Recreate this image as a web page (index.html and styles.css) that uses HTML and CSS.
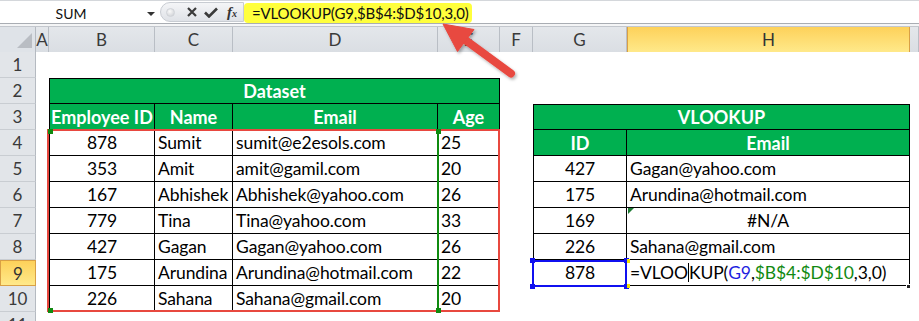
FILE: index.html
```html
<!DOCTYPE html>
<html>
<head>
<meta charset="utf-8">
<link rel="stylesheet" href="styles.css">
</head>
<body>
<div class="app">
  <div class="fbar">
    <div class="namebox"><span class="nb-text">SUM</span><span class="nb-arrow"></span></div>
    <div class="fbtns">
      <span class="dot"></span>
      <svg class="ic-x" width="10" height="10" viewBox="0 0 10 10"><path d="M1 1L9 9M9 1L1 9" stroke="#3a3a3a" stroke-width="2.2"/></svg>
      <svg class="ic-ok" width="14" height="11" viewBox="0 0 14 11"><path d="M1 5.5L5 9.5L13 1.5" stroke="#3a3a3a" stroke-width="2.6" fill="none"/></svg>
      <span class="fx">f<sub>x</sub></span>
    </div>
    <div class="finput"><span class="fhl">=VLOOKUP(G9,$B$4:$D$10,3,0)</span></div>
  </div>
  <div class="fgap"></div>
  <div class="sheet">
    <div class="row hrow">
      <div class="corner"><svg width="36" height="25" viewBox="0 0 36 25"><path d="M17 21L32 21L32 6Z" fill="#b9bdc3"/></svg></div>
      <div class="ch">A</div><div class="ch">B</div><div class="ch">C</div><div class="ch">D</div><div class="ch">E</div><div class="ch">F</div><div class="ch">G</div><div class="ch active">H</div><div class="ch"></div>
    </div>
    <div class="row"><div class="rh">1</div><div class="c"></div><div class="c"></div><div class="c"></div><div class="c"></div><div class="c"></div><div class="c"></div><div class="c"></div><div class="c"></div><div class="c"></div></div>
    <div class="row"><div class="rh">2</div><div class="c"></div><div class="c t tl tt g span4">Dataset</div><div class="c"></div><div class="c"></div><div class="c"></div><div class="c"></div></div>
    <div class="row"><div class="rh">3</div><div class="c"></div><div class="c t tl g">Employee ID</div><div class="c t g">Name</div><div class="c t g">Email</div><div class="c t g">Age</div><div class="c"></div><div class="c t tl tt g span2">VLOOKUP</div><div class="c"></div></div>
    <div class="row"><div class="rh">4</div><div class="c"></div><div class="c t tl ctr">878</div><div class="c t lft">Sumit</div><div class="c t lft">sumit@e2esols.com</div><div class="c t lft">25</div><div class="c"></div><div class="c t tl g">ID</div><div class="c t g">Email</div><div class="c"></div></div>
    <div class="row"><div class="rh">5</div><div class="c"></div><div class="c t tl ctr">353</div><div class="c t lft">Amit</div><div class="c t lft">amit@gamil.com</div><div class="c t lft">20</div><div class="c"></div><div class="c t tl ctr">427</div><div class="c t lft">Gagan@yahoo.com</div><div class="c"></div></div>
    <div class="row"><div class="rh">6</div><div class="c"></div><div class="c t tl ctr">167</div><div class="c t lft">Abhishek</div><div class="c t lft">Abhishek@yahoo.com</div><div class="c t lft">26</div><div class="c"></div><div class="c t tl ctr">175</div><div class="c t lft">Arundina@hotmail.com</div><div class="c"></div></div>
    <div class="row"><div class="rh">7</div><div class="c"></div><div class="c t tl ctr">779</div><div class="c t lft">Tina</div><div class="c t lft">Tina@yahoo.com</div><div class="c t lft">33</div><div class="c"></div><div class="c t tl ctr">169</div><div class="c t ctr err">#N/A</div><div class="c"></div></div>
    <div class="row"><div class="rh">8</div><div class="c"></div><div class="c t tl ctr">427</div><div class="c t lft">Gagan</div><div class="c t lft">Gagan@yahoo.com</div><div class="c t lft">26</div><div class="c"></div><div class="c t tl ctr">226</div><div class="c t lft">Sahana@gmail.com</div><div class="c"></div></div>
    <div class="row"><div class="rh active">9</div><div class="c"></div><div class="c t tl ctr">175</div><div class="c t lft">Arundina</div><div class="c t lft">Arundina@hotmail.com</div><div class="c t lft">22</div><div class="c"></div><div class="c t tl ctr">878</div><div class="c t lft">=VLOO<span class="caret"></span>KUP(<span class="ref-b">G9</span>,<span class="ref-g">$B$4:$D$10</span>,3,0)</div><div class="c"></div></div>
    <div class="row"><div class="rh">10</div><div class="c"></div><div class="c t tl ctr">226</div><div class="c t lft">Sahana</div><div class="c t lft">Sahana@gmail.com</div><div class="c t lft">20</div><div class="c"></div><div class="c"></div><div class="c"></div><div class="c"></div></div>
    <div class="row"><div class="rh">11</div><div class="c"></div><div class="c"></div><div class="c"></div><div class="c"></div><div class="c"></div><div class="c"></div><div class="c"></div><div class="c"></div><div class="c"></div></div>

    <div class="rng-green"></div>
    <div class="rng-red"></div>
    <span class="hd hd-g" style="left:48px;top:102px"></span>
    <span class="hd hd-g" style="left:48px;top:281px"></span>
    <span class="hd hd-g" style="left:436px;top:102px"></span>
    <span class="hd hd-g" style="left:436px;top:281px"></span>
    <div class="rng-blue"></div>
    <span class="hd hd-b" style="left:530px;top:231px"></span>
    <span class="hd hd-b" style="left:530px;top:257px"></span>
    <span class="hd hd-b" style="left:624px;top:231px"></span>
    <span class="hd hd-b" style="left:624px;top:257px"></span>
    <span class="hd hd-y" style="left:627px;top:232px"></span>
    <span class="hd hd-y" style="left:627px;top:257px"></span>
    <span class="fill-h"></span>
  </div>
  <svg class="arrow" width="120" height="100" viewBox="430 10 120 100">
    <defs><filter id="sh" x="-20%" y="-20%" width="140%" height="140%"><feDropShadow dx="1.5" dy="2" stdDeviation="1.5" flood-color="#000" flood-opacity="0.3"/></filter></defs>
    <g filter="url(#sh)" fill="#e8483f" stroke="#e8483f">
      <line x1="466" y1="40.5" x2="511" y2="73.5" stroke-width="8" stroke-linecap="round"/>
      <polygon points="443,24 457.5,51.5 474,29.5" stroke-width="1" stroke-linejoin="round"/>
    </g>
  </svg>
</div>
</body>
</html>
```
FILE: styles.css
```css
* { box-sizing: border-box; }
html, body { margin: 0; padding: 0; background: #fff; }
body { width: 919px; height: 321px; overflow: hidden; font-family: Lato, "Open Sans", sans-serif; }
.app { position: relative; width: 919px; height: 321px; overflow: hidden; }

/* formula bar */
.fbar {
  display: flex; height: 24px;
  border-top: 1px solid #d4d7db; border-bottom: 1px solid #a9adb3;
  background: #fff; padding-top: 1px;
}
.namebox {
  width: 160px; display: flex; align-items: center; position: relative;
  background: #fff;
}
.nb-text { flex: 1; text-align: center; font-size: 14px; color: #111; padding-right: 18px; padding-top: 1px; }
.nb-arrow {
  position: absolute; left: 147px; top: 10px; width: 0; height: 0;
  border-left: 4px solid transparent; border-right: 4px solid transparent; border-top: 4px solid #333;
}
.fbtns {
  width: 84px; display: flex; align-items: center; gap: 0; position: relative;
  background: linear-gradient(#f4f5f7, #dfe2e7);
  border: 1px solid #c8ccd2; border-radius: 11px 0 0 11px; margin: 0 0 1px 0;
}
.dot {
  width: 9px; height: 9px; border-radius: 50%;
  background: radial-gradient(circle at 40% 35%, #fafafa, #c9ccd1);
  border: 1px solid #d0d3d8; margin-left: 5px;
}
.ic-x { margin-left: 12px; }
.ic-ok { margin-left: 7px; }
.fx {
  margin-left: 9px; font-family: "Liberation Serif", serif; font-style: italic; font-weight: bold;
  font-size: 15px; color: #333; line-height: 1;
}
.fx sub { font-size: 10px; vertical-align: 0; }
.finput { flex: 1; display: flex; align-items: center; padding-left: 0; }
.fhl {
  background: #ffff3c; border-radius: 4px; font-size: 15px; color: #111; letter-spacing: -0.15px;
  padding: 2px 3px 2px 8px; height: 20px; line-height: 16px;
}
.fgap { height: 3px; background: #f4f5f6; border-bottom: 1px solid #c3c7cd; }

/* sheet */
.sheet { position: relative; }
.row {
  display: grid;
  grid-template-columns: 36px 13px 106px 78px 205px 62px 33px 94px 283px 9px;
  height: 26px;
}
.hrow { height: 25px; }
.corner { background: #dfe3e8; border-right: 1px solid #b5bac1; border-bottom: 1px solid #b5bac1; }
.corner svg { display: block; }
.ch {
  background: linear-gradient(#e4e7eb, #dadee3);
  border-right: 1px solid #b9bec5; border-bottom: 1px solid #aeb3ba;
  display: flex; align-items: center; justify-content: center;
  font-size: 17px; color: #3a3a3a;
}
.ch.active, .rh.active {
  background: linear-gradient(#fdd15a, #ffe98a);
  border-color: #d9a045; color: #333;
}
.ch.active { border-left: 1px solid #d9a045; border-right: 1px solid #d9a045; border-bottom: 1px solid #d9a045; }
.rh {
  background: #e2e5e9; border-right: 1px solid #b5bac1; border-bottom: 1px solid #c9cdd2;
  display: flex; align-items: center; justify-content: center;
  font-size: 17px; color: #3a3a3a;
}
.rh.active { border: 1px solid #d9a045; }
.c { background: #fff; display: flex; align-items: center; font-size: 17.5px; color: #000; white-space: nowrap; min-width: 0; letter-spacing: -0.1px; }
.t { border-right: 1px solid #000; border-bottom: 1px solid #000; }
.tl { border-left: 1px solid #000; }
.tt { border-top: 1px solid #000; }
.g { background: #00b050; color: #fff; font-weight: bold; justify-content: center; font-size: 18px; letter-spacing: 0; }
.span4 { grid-column: span 4; }
.span2 { grid-column: span 2; }
.ctr { justify-content: center; }
.lft { padding-left: 3px; }
.err { position: relative; }
.err::before {
  content: ""; position: absolute; left: 1px; top: 0; width: 0; height: 0;
  border-top: 6px solid #1e7b34; border-right: 6px solid transparent;
}
.caret { display: inline-block; width: 0; height: 19px; border-left: 1px solid #000; }
.ref-b { color: #1f1fe0; }
.ref-g { color: #118a11; }

/* overlays */
.rng-red { position: absolute; left: 47px; top: 102px; width: 453px; height: 183px; border: 2px solid #e8483f; }
.rng-green { position: absolute; left: 48px; top: 103px; width: 391px; height: 181px; border: 1px solid #0f8a0f; border-right-width: 2px; }
.rng-blue { position: absolute; left: 532px; top: 233px; width: 95px; height: 27px; border: 2px solid #1010f0; }
.hd { position: absolute; width: 5px; height: 5px; }
.hd-g { background: #0f8a0f; }
.hd-b { background: #1010f0; }
.hd-y { background: #f2e300; width: 3px; height: 4px; }
.fill-h { position: absolute; left: 906px; top: 257px; width: 5px; height: 5px; background: #222; border: 1px solid #fff; }
.arrow { position: absolute; left: 430px; top: 10px; pointer-events: none; }
```
